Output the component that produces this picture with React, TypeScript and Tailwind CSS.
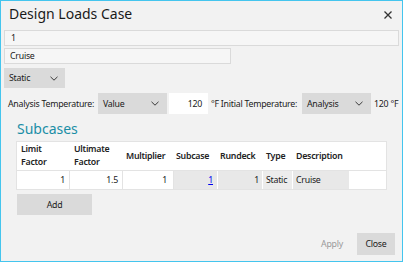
import React from "react";

const Chevron = () => (
  <svg width="8" height="5" viewBox="0 0 8 5" className="shrink-0">
    <polyline points="0.5,0.8 4,4.2 7.5,0.8" fill="none" stroke="#3a3a3a" strokeWidth="1" />
  </svg>
);

export default function App() {
  return (
    <div
      className="w-[403px] h-[262px] border border-[#44c5ee] bg-[#f2f2f2] flex flex-col text-[8.8px] tracking-[-0.25px] text-[#1a1a1a] leading-[12px] whitespace-nowrap"
      style={{ fontFamily: '"Noto Sans", sans-serif' }}
    >
      <div className="flex items-start justify-between h-[29px] pt-[4px] pl-[8px] pr-[10px]">
        <span className="text-[14px] leading-[18px] tracking-normal text-[#1a1a1a]">Design Loads Case</span>
        <svg width="8" height="8" viewBox="0 0 8 8" className="mt-[6px]">
          <path d="M0.5 0.5 L7.5 7.5 M7.5 0.5 L0.5 7.5" stroke="#333" strokeWidth="1.3" />
        </svg>
      </div>
      <div className="mx-[3px] h-[16px] border border-[#dadada] bg-[#f6f6f6] pl-[6px] flex items-center">1</div>
      <div className="ml-[3px] mt-[2px] w-[227px] h-[16px] border border-[#dadada] bg-[#f6f6f6] pl-[5px] flex items-center">
        Cruise
      </div>
      <div className="ml-[3px] mt-[4px] w-[61px] h-[20px] bg-[#dadada] flex items-center justify-between pl-[5px] pr-[7px]">
        <span>Static</span>
        <Chevron />
      </div>
      <div className="flex items-center mt-[5px] h-[21px]">
        <span className="ml-[7px] w-[90px]">Analysis Temperature:</span>
        <div className="flex items-center justify-between bg-[#dadada] pl-[5px] pr-[8px] h-[21px] w-[69px]">
          <span>Value</span>
          <Chevron />
        </div>
        <div className="ml-[2px] w-[39px] h-[21px] bg-white flex items-center justify-end pr-[6px]">120</div>
        <span className="ml-[3px] w-[91px]">°F Initial Temperature:</span>
        <div className="flex items-center justify-between bg-[#dadada] pl-[5px] pr-[8px] h-[21px] w-[69px]">
          <span>Analysis</span>
          <Chevron />
        </div>
        <span className="ml-[3px]">120 °F</span>
      </div>
      <div className="ml-[16px] mt-[6px] text-[14px] leading-[18px] tracking-normal text-[#1b8ea6]">Subcases</div>
      <div className="ml-[15px] mt-[3px] w-[371px] border border-[#e3e3e3] bg-white">
        <div className="grid grid-cols-[53px_53px_51px_44px_45px_30px_57px_36px] h-[29px] border-b border-[#e3e3e3] font-semibold text-[#222] leading-[13px]">
          <div className="pl-[4px] flex items-center">Limit<br />Factor</div>
          <div className="pl-[4px] flex items-center">Ultimate<br />Factor</div>
          <div className="pl-[3px] flex items-center">Multiplier</div>
          <div className="pl-[2px] flex items-center">Subcase</div>
          <div className="pl-[2px] flex items-center">Rundeck</div>
          <div className="pl-[3px] flex items-center">Type</div>
          <div className="pl-[3px] flex items-center">Description</div>
          <div />
        </div>
        <div className="grid grid-cols-[53px_53px_51px_44px_45px_30px_57px_36px] h-[18px]">
          <div className="border-r border-[#e3e3e3] flex items-center justify-end pr-[4px]">1</div>
          <div className="border-r border-[#e3e3e3] flex items-center justify-end pr-[4px]">1.5</div>
          <div className="border-r border-[#e3e3e3] flex items-center justify-end pr-[6px]">1</div>
          <div className="border-r border-white bg-[#e8e8e8] flex items-center justify-end pr-[4px]">
            <span className="text-[#0000ee] underline">1</span>
          </div>
          <div className="border-r border-white bg-[#e8e8e8] flex items-center justify-end pr-[3px]">1</div>
          <div className="border-r border-white bg-[#ececec] flex items-center pl-[3px]">Static</div>
          <div className="border-r border-white bg-[#e8e8e8] flex items-center pl-[3px]">Cruise</div>
          <div />
        </div>
      </div>
      <div className="ml-[16px] mt-[4px] w-[75px] h-[21px] bg-[#dadada] flex items-center justify-center">Add</div>
      <div className="mt-auto mb-[6px] mr-[7px] flex items-center justify-end">
        <span className="text-[#9a9a9a] mr-[14px]">Apply</span>
        <div className="w-[38px] h-[22px] bg-[#dadada] flex items-center justify-center">Close</div>
      </div>
    </div>
  );
}
